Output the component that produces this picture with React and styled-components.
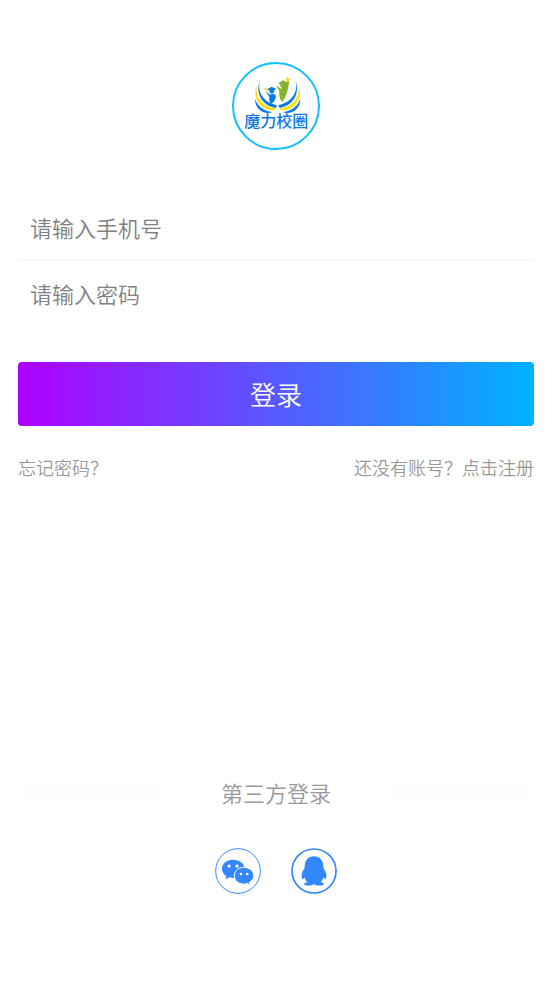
import React from "react";
import styled, { createGlobalStyle } from "styled-components";

const GlobalStyle = createGlobalStyle`
  *, *::before, *::after { box-sizing: border-box; }
  body {
    margin: 0;
    background: #fff;
    font-family: "Noto Sans CJK SC", sans-serif;
    font-weight: 350;
  }
`;

const Page = styled.main`
  display: flex;
  flex-direction: column;
  padding: 62px 18px 88px;
`;

const Logo = styled.svg`
  width: 88px;
  height: 88px;
  align-self: center;
  margin-bottom: 45px;
`;

const LogoText = styled.text`
  font-size: 48px;
  font-weight: 500;
  fill: #0a78e6;
`;

const Form = styled.form`
  display: flex;
  flex-direction: column;
`;

const Field = styled.input`
  width: 100%;
  height: 64px;
  padding: 0 12px;
  border: 0;
  outline: 0;
  background: transparent;
  color: #333;
  font-family: inherit;
  font-size: 22px;
  font-weight: inherit;
  &::placeholder { color: #808080; opacity: 1; }
`;

const Divider = styled.hr`
  width: 100%;
  height: 2px;
  margin: 0;
  border: 0;
  background: #f8f8f8;
`;

const LoginButton = styled.button`
  height: 64px;
  margin-top: 37px;
  padding: 0 0 2px;
  border: 0;
  border-radius: 4px;
  background: linear-gradient(90deg, #af00ff, #00b2ff);
  color: #fff;
  font-family: inherit;
  font-size: 26px;
  font-weight: inherit;
  cursor: pointer;
`;

const Links = styled.nav`
  display: flex;
  justify-content: space-between;
  margin-top: 28px;
`;

const TextLink = styled.a`
  color: #999;
  font-size: 18px;
  line-height: 26px;
  text-decoration: none;
`;

const ThirdParty = styled.section`
  margin-top: 296px;
`;

const Heading = styled.h2`
  display: flex;
  align-items: center;
  gap: 60px;
  margin: 0;
  color: #999;
  font-size: 22px;
  font-weight: inherit;
  line-height: 32px;
  &::before, &::after {
    content: "";
    flex: 1;
    height: 2px;
    background: #fafafa;
  }
`;

const Providers = styled.div`
  display: flex;
  justify-content: center;
  gap: 30px;
  margin-top: 40px;
`;

const ProviderButton = styled.button`
  width: 46px;
  height: 46px;
  padding: 0;
  border: 0;
  border-radius: 50%;
  background: transparent;
  color: #3388ff;
  cursor: pointer;
  svg { display: block; width: 100%; height: 100%; }
`;

function Wing() {
  return (
    <>
      <path d="M102 73C92 108 112 139 153 148L149 156C114 151 85 117 102 73Z" fill="#0a78e6" />
      <path d="M93 88C86 124 110 151 148 157L145 163C132 165 119 161 110 153C90 139 82 113 93 88Z" fill="#ffdf20" />
      <path d="M87 128C94 150 112 164 139 168C119 178 86 162 87 128Z" fill="#0a78e6" />
    </>
  );
}

function SchoolLogo() {
  return (
    <Logo viewBox="18 18 264 264" role="img" aria-label="魔力校圈">
      <circle cx="150" cy="150" r="129" fill="#fff" stroke="#12bfff" strokeWidth="6" />
      <Wing />
      <g transform="translate(310 0) scale(-1 1)"><Wing /></g>
      <path d="M124 99L137 92L151 99L145 103Q146 112 137 113Q130 111 130 104Z" fill="#0a78e6" />
      <path d="M119 105L132 116Q140 112 149 117C151 126 147 136 136 144C129 136 129 130 130 123Z" fill="#0a78e6" />
      <path d="M157 81L171 73L186 81L180 86Q180 96 170 96Q162 94 163 86Z" fill="#82b52b" />
      <path d="M150 87L164 98Q173 98 187 73L190 76C185 101 184 119 168 139C160 127 159 115 160 106Z" fill="#82b52b" />
      <path d="M185 62L188 67L194 69L189 73L189 79L184 75L179 76L181 71L178 66L183 67Z" fill="#ffd51c" />
      <path d="M120 94L122 98L127 99L123 102L123 106L119 103L115 104L117 100L114 97L119 97Z" fill="#ffd51c" />
      <LogoText x="151" y="214" textAnchor="middle">魔力校圈</LogoText>
    </Logo>
  );
}

function WechatIcon() {
  return (
    <svg viewBox="20 17 140 140" aria-hidden="true">
      <circle cx="90" cy="87" r="68" fill="none" stroke="currentColor" strokeWidth="3" />
      <path d="M75 53C55 53 41 65 41 81C41 89 46 97 54 102L53 112L64 106Q70 108 77 108C97 108 110 96 110 81C110 65 95 53 75 53Z" fill="currentColor" />
      <path d="M108 76C91 76 79 86 79 102C79 117 92 127 108 127Q114 127 118 125L127 130L125 121C133 117 138 110 138 102C138 87 125 76 108 76Z" fill="currentColor" stroke="#fff" strokeWidth="3" />
      <g fill="#fff">
        <circle cx="63" cy="72" r="5" />
        <circle cx="87" cy="72" r="5" />
        <circle cx="99" cy="96" r="4" />
        <circle cx="118" cy="96" r="4" />
      </g>
    </svg>
  );
}

function QqIcon() {
  return (
    <svg viewBox="20 17 140 140" aria-hidden="true">
      <circle cx="90" cy="87" r="67" fill="none" stroke="currentColor" strokeWidth="5" />
      <path d="M90 42C73 42 62 54 62 72L60 81C54 88 50 100 53 109C54 113 59 111 62 107C63 113 66 118 70 121C63 122 59 125 60 128C63 132 84 132 90 127C96 132 117 132 120 128C121 125 117 122 110 121C114 118 117 113 118 107C121 111 126 113 127 109C130 100 126 88 120 81L118 72C118 54 107 42 90 42Z" fill="currentColor" />
    </svg>
  );
}

export default function App() {
  return (
    <>
      <GlobalStyle />
      <Page>
        <SchoolLogo />
        <Form onSubmit={(e) => e.preventDefault()}>
          <Field type="tel" aria-label="手机号" placeholder="请输入手机号" />
          <Divider />
          <Field type="password" aria-label="密码" placeholder="请输入密码" />
          <LoginButton type="submit">登录</LoginButton>
        </Form>
        <Links>
          <TextLink href="#forgot">忘记密码？</TextLink>
          <TextLink href="#register">还没有账号？点击注册</TextLink>
        </Links>
        <ThirdParty>
          <Heading>第三方登录</Heading>
          <Providers>
            <ProviderButton type="button" aria-label="微信登录"><WechatIcon /></ProviderButton>
            <ProviderButton type="button" aria-label="QQ登录"><QqIcon /></ProviderButton>
          </Providers>
        </ThirdParty>
      </Page>
    </>
  );
}
